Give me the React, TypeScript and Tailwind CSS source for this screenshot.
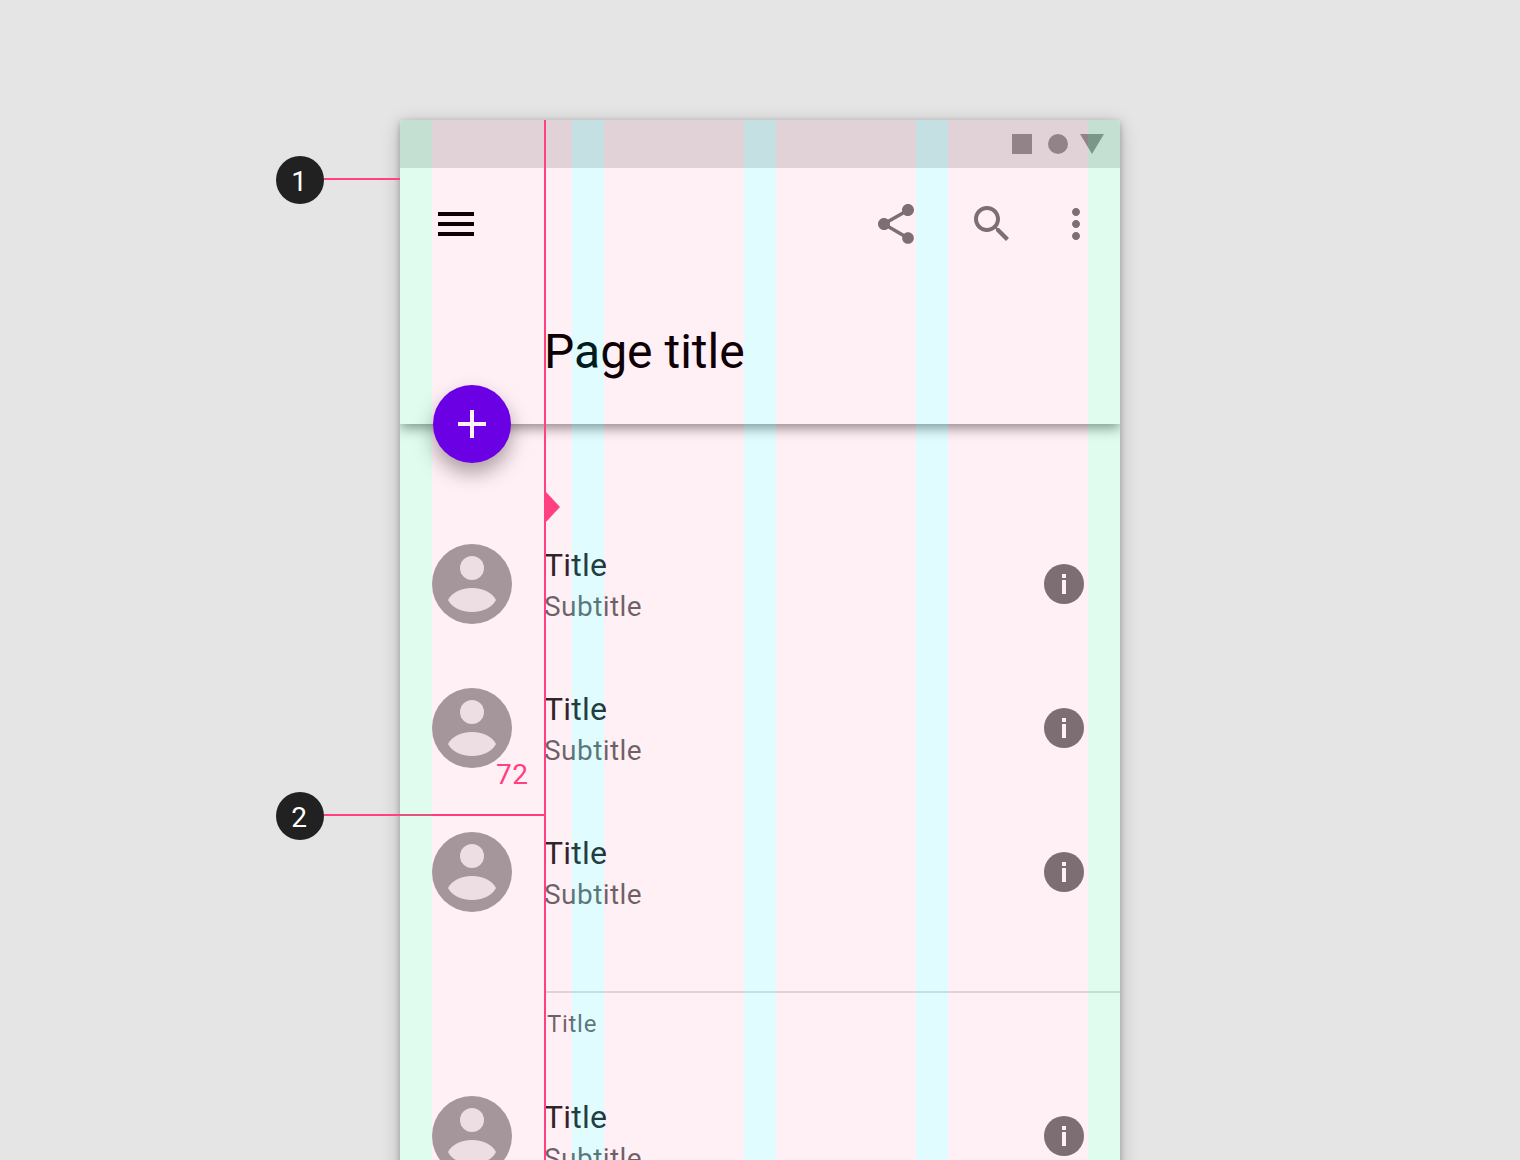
const Avatar = () => (
  <svg width="80" height="80" viewBox="0 0 80 80" className="shrink-0">
    <circle cx="40" cy="40" r="40" fill="#a0a0a0" />
    <circle cx="40" cy="24" r="12" fill="#ececec" />
    <path d="M16 56 C24 40 56 40 64 56 C56 72 24 72 16 56 Z" fill="#ececec" />
  </svg>
);

const InfoIcon = () => (
  <svg width="40" height="40" viewBox="0 0 40 40" className="shrink-0">
    <circle cx="20" cy="20" r="20" fill="#757575" />
    <rect x="18" y="10" width="4" height="4" fill="#fff" />
    <rect x="18" y="16" width="4" height="14" fill="#fff" />
  </svg>
);

const Icon = ({ d, fill = "#757575" }: { d: string; fill?: string }) => (
  <svg width="48" height="48" viewBox="0 0 24 24" fill={fill}>
    <path d={d} />
  </svg>
);

const ListRow = () => (
  <div className="flex h-[144px] items-center pl-8 pr-9">
    <Avatar />
    <div className="ml-8 flex-1 pt-1">
      <div className="text-[32px] leading-[40px] tracking-[0.2px] text-[rgba(0,0,0,0.87)]">Title</div>
      <div className="mt-[2px] text-[28px] leading-[40px] tracking-[0.45px] text-[rgba(0,0,0,0.6)]">Subtitle</div>
    </div>
    <InfoIcon />
  </div>
);

const Callout = ({ n, top, lineWidth }: { n: number; top: string; lineWidth: string }) => (
  <div className={`absolute left-[276px] ${top} flex h-12 w-12 items-center justify-center rounded-full bg-[#212121] pt-[3px] pr-[2px] text-[28px] text-white`}>
    {n}
    <div className={`absolute top-[22px] left-12 h-[2px] ${lineWidth} bg-[#ff4081]`} />
  </div>
);

export default function App() {
  return (
    <div className="relative h-[1160px] overflow-hidden bg-[#e5e5e5] pt-[120px] pl-[400px] font-['Roboto',sans-serif]">
      {/* phone outline shadow sits behind the screen */}
      <div className="absolute top-[120px] left-[400px] h-[1100px] w-[720px] rounded-t shadow-[0_2px_6px_rgba(0,0,0,0.25),0_4px_20px_rgba(0,0,0,0.2)]" />

      <div className="relative w-[720px] overflow-hidden rounded-t bg-white">
        <div className="relative z-10 flex h-12 items-center justify-end gap-4 bg-[#e0e0e0] pr-4">
          <div className="h-5 w-5 bg-[#8c8c8c]" />
          <div className="h-5 w-5 rounded-full bg-[#8c8c8c]" />
          <svg width="24" height="20" viewBox="0 0 24 20" className="-ml-1">
            <path d="M0 0H24L12 20Z" fill="#8c8c8c" />
          </svg>
        </div>

        <header className="relative h-[256px] bg-white shadow-[0_4px_12px_rgba(0,0,0,0.45)]">
          <div className="flex pt-8 pl-8 pr-5">
            <Icon d="M3 18h18v-2H3v2zm0-5h18v-2H3v2zm0-7v2h18V6H3z" fill="#000" />
            <div className="ml-auto flex">
              <Icon d="M18 16.08c-.76 0-1.44.3-1.96.77L8.91 12.7c.05-.23.09-.46.09-.7s-.04-.47-.09-.7l7.05-4.11c.54.5 1.25.81 2.04.81 1.66 0 3-1.34 3-3s-1.34-3-3-3-3 1.34-3 3c0 .24.04.47.09.7L8.04 9.81C7.5 9.31 6.79 9 6 9c-1.66 0-3 1.34-3 3s1.34 3 3 3c.79 0 1.5-.31 2.04-.81l7.12 4.16c-.05.21-.08.43-.08.65 0 1.61 1.31 2.92 2.92 2.92 1.61 0 2.92-1.31 2.92-2.92s-1.31-2.92-2.92-2.92z" />
              <div className="ml-12">
                <Icon d="M15.5 14h-.79l-.28-.27C15.41 12.59 16 11.11 16 9.5 16 5.91 13.09 3 9.5 3S3 5.91 3 9.5 5.91 16 9.5 16c1.61 0 3.09-.59 4.23-1.57l.27.28v.79l5 4.99L20.49 19l-4.99-5zm-6 0C7.01 14 5 11.99 5 9.5S7.01 5 9.5 5 14 7.01 14 9.5 11.99 14 9.5 14z" />
              </div>
              <div className="ml-9">
                <Icon d="M12 8c1.1 0 2-.9 2-2s-.9-2-2-2-2 .9-2 2 .9 2 2 2zm0 2c-1.1 0-2 .9-2 2s.9 2 2 2 2-.9 2-2-.9-2-2-2zm0 6c-1.1 0-2 .9-2 2s.9 2 2 2 2-.9 2-2-.9-2-2-2z" />
              </div>
            </div>
          </div>
          <h1 className="mt-[72px] pl-[144px] text-[48px] leading-[64px] font-normal text-black">Page title</h1>
          <button className="absolute bottom-[-39px] left-[33px] flex h-[78px] w-[78px] items-center justify-center rounded-full bg-[#6200ee] shadow-[0_10px_20px_rgba(0,0,0,0.35)]">
            <svg width="48" height="48" viewBox="0 0 48 48">
              <path d="M22 10h4v12h12v4H26v12h-4V26H10v-4h12z" fill="#fff" />
            </svg>
          </button>
        </header>

        <main className="pt-[88px]">
          <ListRow />
          <ListRow />
          <ListRow />
          <div className="mt-[47px] ml-[146px] border-t-2 border-[#e0e0e0]">
            <div className="pt-[14px] pl-[1px] text-[24px] leading-[34px] tracking-[0.7px] text-[rgba(0,0,0,0.6)]">Title</div>
          </div>
          <div className="mt-[23px]">
            <ListRow />
          </div>
        </main>

        {/* keyline columns, laid over the screen */}
        <div className="pointer-events-none absolute inset-0 z-20 flex">
          <div className="w-8 bg-[rgba(0,230,118,0.12)]" />
          <div className="w-[140px] bg-[rgba(255,0,85,0.06)]" />
          <div className="w-8 bg-[rgba(0,229,255,0.12)]" />
          <div className="w-[140px] bg-[rgba(255,0,85,0.06)]" />
          <div className="w-8 bg-[rgba(0,229,255,0.12)]" />
          <div className="w-[140px] bg-[rgba(255,0,85,0.06)]" />
          <div className="w-8 bg-[rgba(0,229,255,0.12)]" />
          <div className="w-[140px] bg-[rgba(255,0,85,0.06)]" />
          <div className="w-8 bg-[rgba(0,230,118,0.12)]" />
        </div>

        {/* redline at 72 */}
        <div className="absolute top-0 bottom-0 left-[144px] z-20 w-[2px] bg-[#ff4081]" />
        <svg width="14" height="30" viewBox="0 0 14 30" className="absolute top-[372px] left-[146px] z-20">
          <path d="M0 0L14 15L0 30Z" fill="#ff4081" />
        </svg>
        <div className="absolute top-[637px] left-[96px] z-20 text-[28px] leading-[36px] tracking-[0.5px] text-[#ff4081]">72</div>
      </div>

      <Callout n={1} top="top-[156px]" lineWidth="w-[76px]" />
      <Callout n={2} top="top-[792px]" lineWidth="w-[221px]" />
    </div>
  );
}
